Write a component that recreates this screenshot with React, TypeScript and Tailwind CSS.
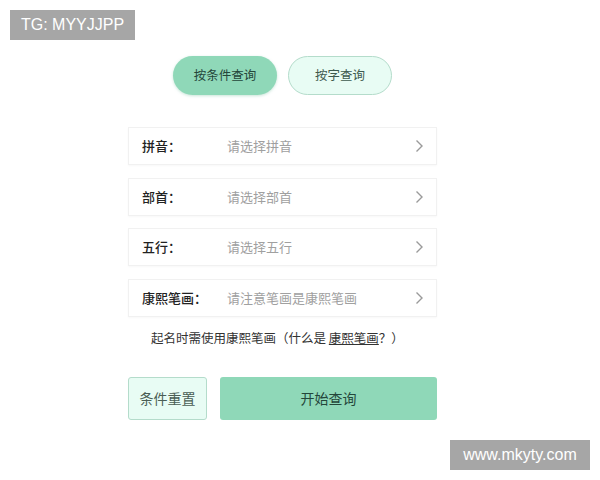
import React from "react";

const rows = [
  { label: "拼音：", placeholder: "请选择拼音" },
  { label: "部首：", placeholder: "请选择部首" },
  { label: "五行：", placeholder: "请选择五行" },
  { label: "康熙笔画：", placeholder: "请注意笔画是康熙笔画" },
];

const Chevron = () => (
  <svg className="h-4 w-4 text-[#9a9a9a]" viewBox="0 0 16 16" fill="none" stroke="currentColor" strokeWidth="1.4">
    <path d="M5.5 2.5 L11 8 L5.5 13.5" />
  </svg>
);

export default function App() {
  return (
    <div
      className="relative h-[480px] w-[600px] bg-white"
      style={{ fontFamily: '"Noto Sans CJK SC", "Liberation Sans", sans-serif' }}
    >
      {/* watermarks */}
      <div
        className="absolute left-[10px] top-[10px] flex h-[30px] w-[125px] items-center justify-center bg-[#a6a6a6] text-[16px] text-white"
        style={{ fontFamily: '"Liberation Sans", sans-serif' }}
      >
        TG: MYYJJPP
      </div>
      <div
        className="absolute left-[450px] top-[440px] flex h-[30px] w-[140px] items-center justify-center bg-[#a6a6a6] text-[16px] text-white"
        style={{ fontFamily: '"Liberation Sans", sans-serif' }}
      >
        www.mkyty.com
      </div>

      <div className="ml-[128px] flex w-[309px] flex-col pt-[56px]">
        <div className="flex justify-center gap-[11px]">
          <button className="h-[39px] w-[104px] rounded-full bg-[#8fd8b8] text-[12.5px] text-[#24463a] shadow-[0_1px_3px_rgba(120,190,160,0.4)]">
            按条件查询
          </button>
          <button className="h-[39px] w-[104px] rounded-full border border-[#b4dccb] bg-[#e8fcf4] text-[12.5px] text-[#3e5a4e]">
            按字查询
          </button>
        </div>

        <div className="mt-[32px] flex flex-col gap-[12.5px]">
          {rows.map((r) => (
            <div
              key={r.label}
              className="flex h-[38px] items-center border border-[#f1f1f1] pl-[13px] pr-[9px] shadow-[0_1px_2px_rgba(0,0,0,0.03)]"
            >
              <span className="w-[85px] text-[13px] font-medium text-[#222]">{r.label}</span>
              <span className="flex-1 text-[13px] text-[#a0a0a0]">{r.placeholder}</span>
              <Chevron />
            </div>
          ))}
        </div>

        <p className="mt-[12px] pl-[23px] text-[12.5px] text-[#333]">
          起名时需使用康熙笔画（什么是 <span className="underline">康熙笔画</span>？）
        </p>

        <div className="mt-[30px] flex gap-[13px]">
          <button className="h-[43px] w-[79px] rounded-[3px] border border-[#b4dccb] bg-[#e8fcf4] text-[14px] text-[#4a5e55]">
            条件重置
          </button>
          <button className="h-[43px] flex-1 rounded-[3px] bg-[#8fd8b8] text-[14px] text-[#24463a]">
            开始查询
          </button>
        </div>
      </div>
    </div>
  );
}
